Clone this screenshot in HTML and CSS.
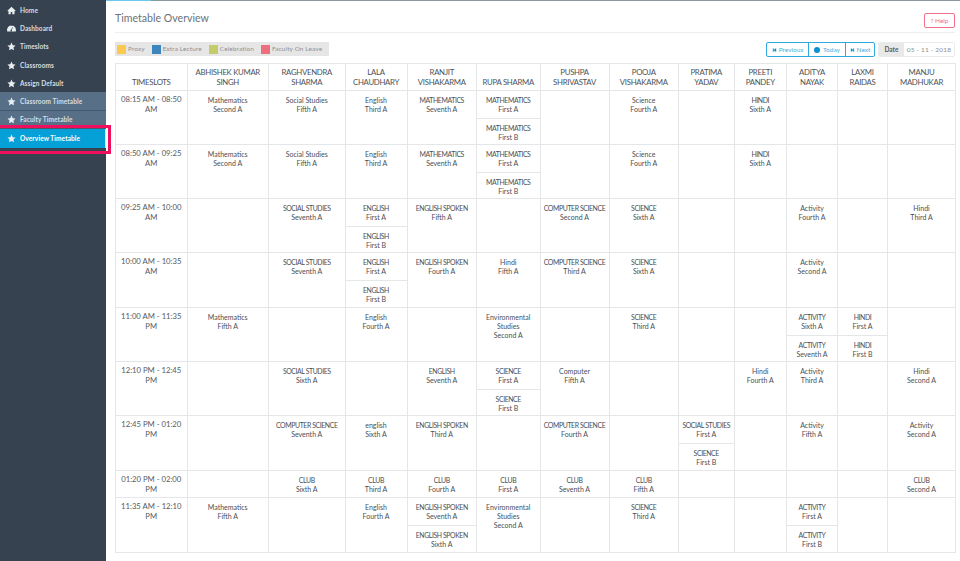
FILE: index.html
```html
<!DOCTYPE html>
<html lang="en">
<head>
    <meta charset="UTF-8">
    <meta name="viewport" content="width=device-width, initial-scale=1.0">
    <title>Timetable Overview</title>
    <link rel="stylesheet" href="styles.css">
</head>
<body>
    <svg class="icon-defs" width="0" height="0">
        <symbol id="star" viewBox="0 0 24 24"><path d="M12 1.5l3.300 6.900 7.500 1-5.500 5.200 1.400 7.500L12 18.400l-6.700 3.700 1.400-7.500L1.200 9.400l7.500-1z"/></symbol>
        <symbol id="home" viewBox="0 0 24 24"><path d="M12 2L1 12.500l1.800 1.800L4 13.200V22h6v-6h4v6h6v-8.800l1.200 1.100 1.800-1.800z"/></symbol>
        <symbol id="gauge" viewBox="0 0 24 24"><path d="M12 4C5.400 4 0 9.400 0 16c0 1.500.3 2.800.8 4h22.400c.5-1.200.8-2.500.8-4 0-6.600-5.400-12-12-12zm-1 11.500l3-7 1.500.6-3 7A2 2 0 1 1 11 15.500z"/></symbol>
        <symbol id="step-back" viewBox="0 0 24 24"><path d="M4 3h4v8l12-8v18L8 13v8H4z"/></symbol>
        <symbol id="step-next" viewBox="0 0 24 24"><path d="M20 3h-4v8L4 3v18l12-8v8h4z"/></symbol>
    </svg>

    <aside class="sidebar">
        <nav>
            <a class="nav-item" href="#"><svg class="nav-icon"><use href="#home"/></svg>Home</a>
            <a class="nav-item" href="#"><svg class="nav-icon"><use href="#gauge"/></svg>Dashboard</a>
            <a class="nav-item" href="#"><svg class="nav-icon"><use href="#star"/></svg>Timeslots</a>
            <a class="nav-item" href="#"><svg class="nav-icon"><use href="#star"/></svg>Classrooms</a>
            <a class="nav-item" href="#"><svg class="nav-icon"><use href="#star"/></svg>Assign Default</a>
            <a class="nav-item open" href="#"><svg class="nav-icon"><use href="#star"/></svg>Classroom Timetable</a>
            <a class="nav-item open" href="#"><svg class="nav-icon"><use href="#star"/></svg>Faculty Timetable</a>
            <a class="nav-item active" href="#"><svg class="nav-icon"><use href="#star"/></svg>Overview Timetable</a>
        </nav>
    </aside>

    <main class="content">
        <div class="progress"></div>
        <header class="page-head">
            <h1>Timetable Overview</h1>
            <a class="help" href="#">? Help</a>
        </header>

        <div class="toolbar">
            <ul class="legend">
                <li><span class="swatch proxy"></span>Proxy</li>
                <li><span class="swatch extra"></span>Extra Lecture</li>
                <li><span class="swatch celebration"></span>Celebration</li>
                <li><span class="swatch leave"></span>Faculty On Leave</li>
            </ul>
            <div class="controls">
                <div class="btn-group">
                    <a class="btn-prev" href="#"><svg class="btn-icon"><use href="#step-back"/></svg>Previous</a>
                    <a class="btn-today" href="#"><span class="dot"></span>Today</a>
                    <a class="btn-next" href="#"><svg class="btn-icon"><use href="#step-next"/></svg>Next</a>
                </div>
                <div class="date-field">
                    <span class="date-label">Date</span>
                    <span class="date-value">05 - 11 - 2018</span>
                </div>
            </div>
        </div>

        <table class="timetable">
            <colgroup>
                <col class="c-time"><col class="c1"><col class="c2"><col class="c3"><col class="c4"><col class="c5"><col class="c6"><col class="c7"><col class="c8"><col class="c9"><col class="c10"><col class="c11"><col class="c12">
            </colgroup>
            <thead>
                <tr>
                    <th>TIMESLOTS</th>
                    <th>ABHISHEK KUMAR SINGH</th>
                    <th>RAGHVENDRA SHARMA</th>
                    <th>LALA CHAUDHARY</th>
                    <th>RANJIT VISHAKARMA</th>
                    <th>RUPA SHARMA</th>
                    <th>PUSHPA SHRIVASTAV</th>
                    <th>POOJA VISHAKARMA</th>
                    <th>PRATIMA YADAV</th>
                    <th>PREETI PANDEY</th>
                    <th>ADITYA NAYAK</th>
                    <th>LAXMI RAIDAS</th>
                    <th>MANJU MADHUKAR</th>
                </tr>
            </thead>
            <tbody>
                <tr>
                    <td class="time">08:15 AM - 08:50 AM</td>
                    <td>Mathematics<br>Second A</td>
                    <td>Social Studies<br>Fifth A</td>
                    <td>English<br>Third A</td>
                    <td><span class="caps">MATHEMATICS</span><br>Seventh A</td>
                    <td class="split"><div><span class="caps">MATHEMATICS</span><br>First A</div><div><span class="caps">MATHEMATICS</span><br>First B</div></td>
                    <td></td>
                    <td>Science<br>Fourth A</td>
                    <td></td>
                    <td><span class="caps">HINDI</span><br>Sixth A</td>
                    <td></td>
                    <td></td>
                    <td></td>
                </tr>
                <tr>
                    <td class="time">08:50 AM - 09:25 AM</td>
                    <td>Mathematics<br>Second A</td>
                    <td>Social Studies<br>Fifth A</td>
                    <td>English<br>Third A</td>
                    <td><span class="caps">MATHEMATICS</span><br>Seventh A</td>
                    <td class="split"><div><span class="caps">MATHEMATICS</span><br>First A</div><div><span class="caps">MATHEMATICS</span><br>First B</div></td>
                    <td></td>
                    <td>Science<br>Fourth A</td>
                    <td></td>
                    <td><span class="caps">HINDI</span><br>Sixth A</td>
                    <td></td>
                    <td></td>
                    <td></td>
                </tr>
                <tr>
                    <td class="time">09:25 AM - 10:00 AM</td>
                    <td></td>
                    <td><span class="caps">SOCIAL STUDIES</span><br>Seventh A</td>
                    <td class="split"><div><span class="caps">ENGLISH</span><br>First A</div><div><span class="caps">ENGLISH</span><br>First B</div></td>
                    <td><span class="caps">ENGLISH SPOKEN</span><br>Fifth A</td>
                    <td></td>
                    <td><span class="caps">COMPUTER SCIENCE</span><br>Second A</td>
                    <td><span class="caps">SCIENCE</span><br>Sixth A</td>
                    <td></td>
                    <td></td>
                    <td>Activity<br>Fourth A</td>
                    <td></td>
                    <td>Hindi<br>Third A</td>
                </tr>
                <tr class="tall">
                    <td class="time">10:00 AM - 10:35 AM</td>
                    <td></td>
                    <td><span class="caps">SOCIAL STUDIES</span><br>Seventh A</td>
                    <td class="split"><div><span class="caps">ENGLISH</span><br>First A</div><div><span class="caps">ENGLISH</span><br>First B</div></td>
                    <td><span class="caps">ENGLISH SPOKEN</span><br>Fourth A</td>
                    <td>Hindi<br>Fifth A</td>
                    <td><span class="caps">COMPUTER SCIENCE</span><br>Third A</td>
                    <td><span class="caps">SCIENCE</span><br>Sixth A</td>
                    <td></td>
                    <td></td>
                    <td>Activity<br>Second A</td>
                    <td></td>
                    <td></td>
                </tr>
                <tr>
                    <td class="time">11:00 AM - 11:35 PM</td>
                    <td>Mathematics<br>Fifth A</td>
                    <td></td>
                    <td>English<br>Fourth A</td>
                    <td></td>
                    <td>Environmental<br>Studies<br>Second A</td>
                    <td></td>
                    <td><span class="caps">SCIENCE</span><br>Third A</td>
                    <td></td>
                    <td></td>
                    <td class="split"><div><span class="caps">ACTIVITY</span><br>Sixth A</div><div><span class="caps">ACTIVITY</span><br>Seventh A</div></td>
                    <td class="split"><div><span class="caps">HINDI</span><br>First A</div><div><span class="caps">HINDI</span><br>First B</div></td>
                    <td></td>
                </tr>
                <tr>
                    <td class="time">12:10 PM - 12:45 PM</td>
                    <td></td>
                    <td><span class="caps">SOCIAL STUDIES</span><br>Sixth A</td>
                    <td></td>
                    <td><span class="caps">ENGLISH</span><br>Seventh A</td>
                    <td class="split"><div><span class="caps">SCIENCE</span><br>First A</div><div><span class="caps">SCIENCE</span><br>First B</div></td>
                    <td>Computer<br>Fifth A</td>
                    <td></td>
                    <td></td>
                    <td>Hindi<br>Fourth A</td>
                    <td>Activity<br>Third A</td>
                    <td></td>
                    <td>Hindi<br>Second A</td>
                </tr>
                <tr class="tall">
                    <td class="time">12:45 PM - 01:20 PM</td>
                    <td></td>
                    <td><span class="caps">COMPUTER SCIENCE</span><br>Seventh A</td>
                    <td>english<br>Sixth A</td>
                    <td><span class="caps">ENGLISH SPOKEN</span><br>Third A</td>
                    <td></td>
                    <td><span class="caps">COMPUTER SCIENCE</span><br>Fourth A</td>
                    <td></td>
                    <td class="split"><div><span class="caps">SOCIAL STUDIES</span><br>First A</div><div><span class="caps">SCIENCE</span><br>First B</div></td>
                    <td></td>
                    <td>Activity<br>Fifth A</td>
                    <td></td>
                    <td>Activity<br>Second A</td>
                </tr>
                <tr class="short">
                    <td class="time">01:20 PM - 02:00 PM</td>
                    <td></td>
                    <td><span class="caps">CLUB</span><br>Sixth A</td>
                    <td><span class="caps">CLUB</span><br>Third A</td>
                    <td><span class="caps">CLUB</span><br>Fourth A</td>
                    <td><span class="caps">CLUB</span><br>First A</td>
                    <td><span class="caps">CLUB</span><br>Seventh A</td>
                    <td><span class="caps">CLUB</span><br>Fifth A</td>
                    <td></td>
                    <td></td>
                    <td></td>
                    <td></td>
                    <td><span class="caps">CLUB</span><br>Second A</td>
                </tr>
                <tr class="tall">
                    <td class="time">11:35 AM - 12:10 PM</td>
                    <td>Mathematics<br>Fifth A</td>
                    <td></td>
                    <td>English<br>Fourth A</td>
                    <td class="split"><div><span class="caps">ENGLISH SPOKEN</span><br>Seventh A</div><div><span class="caps">ENGLISH SPOKEN</span><br>Sixth A</div></td>
                    <td>Environmental<br>Studies<br>Second A</td>
                    <td></td>
                    <td><span class="caps">SCIENCE</span><br>Third A</td>
                    <td></td>
                    <td></td>
                    <td class="split"><div><span class="caps">ACTIVITY</span><br>First A</div><div><span class="caps">ACTIVITY</span><br>First B</div></td>
                    <td></td>
                    <td></td>
                </tr>
            </tbody>
        </table>
    </main>

    <div class="callout"></div>
</body>
</html>
```

FILE: styles.css
```css
* {
    box-sizing: border-box;
}

html, body {
    height: 100%;
}

body {
    margin: 0;
    display: flex;
    background: #fff;
    color: #4a4f55;
    font-family: "Lato", "Open Sans", sans-serif;
    font-size: 7px;
    line-height: 9px;
    overflow: hidden;
}

a {
    color: inherit;
    text-decoration: none;
}

.icon-defs {
    position: absolute;
}

/* Sidebar */
.sidebar {
    flex: 0 0 106px;
    background: #36424f;
    padding-top: 1px;
}

.nav-item {
    display: flex;
    align-items: center;
    height: 18.3px;
    padding-left: 7px;
    color: #d7dde3;
    font-size: 6.5px;
    font-weight: 700;
    letter-spacing: 0.1px;
    white-space: nowrap;
}

.nav-icon {
    flex: none;
    width: 9px;
    height: 9px;
    margin-right: 4px;
    fill: #e8edf1;
}

.nav-item.open {
    background: #587087;
    border-bottom: 1px solid #465a6e;
}

.nav-item.active {
    background: #05a0d8;
    border-right: 1px solid #cfeaf6;
    color: #fff;
    height: 19px;
}

/* Main column */
.content {
    flex: 1;
    min-width: 0;
    padding: 0 5px 0 9px;
    position: relative;
}

.progress {
    position: absolute;
    top: 0;
    left: 0;
    right: 0;
    height: 1px;
    background: linear-gradient(to right, #6cc7ee 45px, #8f979f 45px);
}

.page-head {
    display: flex;
    justify-content: space-between;
    align-items: center;
    height: 33px;
    margin-bottom: 9px;
    border-bottom: 1px solid #eceef0;
    padding-top: 3px;
}

.page-head h1 {
    margin: 0;
    color: #6b7278;
    font-size: 10.6px;
    line-height: 14px;
    font-weight: 400;
}

.help {
    border: 1px solid #f2708a;
    border-radius: 2px;
    padding: 3px 4px;
    color: #f2708a;
    font-size: 6.5px;
    line-height: 7px;
    margin-top: 5px;
    width: 31px;
    text-align: center;
}

.toolbar {
    display: flex;
    justify-content: space-between;
    align-items: flex-start;
    height: 21px;
}

.legend {
    display: flex;
    gap: 7px;
    list-style: none;
    margin: 0;
    padding: 1px 7px 1px 2px;
    height: 14px;
    background: #e6e6e6;
    color: #8d9296;
    font-size: 6.4px;
    line-height: 12px;
    letter-spacing: 0.15px;
}

.legend li {
    display: flex;
    align-items: center;
    gap: 2px;
}

.swatch {
    width: 9px;
    height: 9px;
}

.proxy { background: #fbc94f; }
.extra { background: #3d85bd; }
.celebration { background: #c5cb68; }
.leave { background: #ec6f7c; }

.controls {
    display: flex;
    gap: 3px;
}

.btn-group {
    display: flex;
    height: 15px;
    border: 1px solid #2fa8de;
    border-radius: 2px;
    color: #45b0e2;
    font-size: 6.5px;
    line-height: 13px;
}

.btn-group a {
    display: flex;
    align-items: center;
    justify-content: center;
    gap: 2px;
    border-left: 1px solid #2fa8de;
}

.btn-group a:first-child {
    border-left: 0;
}

.btn-prev { width: 41px; }
.btn-today { width: 37px; }
.btn-next { width: 29px; }

.btn-icon {
    width: 5px;
    height: 6px;
    fill: #0a8fd0;
}

.dot {
    width: 6px;
    height: 6px;
    margin-right: 1px;
    border-radius: 50%;
    background: #0a8fd0;
}

.date-field {
    display: flex;
    height: 15px;
    border: 1px solid #e9ecef;
    border-radius: 2px;
    font-size: 6.5px;
    line-height: 13px;
}

.date-label {
    width: 25px;
    text-align: center;
    background: #e9e9e9;
    color: #5a5f64;
    font-weight: 700;
}

.date-value {
    width: 50px;
    text-align: center;
    color: #8b9096;
    letter-spacing: 0.2px;
}

/* Table */
.timetable {
    width: 841px;
    table-layout: fixed;
    border-collapse: collapse;
    text-align: center;
}

.c-time { width: 71.5px; }
.c1 { width: 81.5px; }
.c2 { width: 76.5px; }
.c3 { width: 62px; }
.c4 { width: 69.5px; }
.c5 { width: 63.5px; }
.c6 { width: 69px; }
.c7 { width: 69.5px; }
.c8 { width: 55.5px; }
.c9 { width: 52.5px; }
.c10 { width: 51px; }
.c11 { width: 50px; }
.c12 { width: 68px; }

.timetable th,
.timetable td {
    border: 1px solid #e4e6e8;
    padding: 0;
}

.timetable th {
    height: 27px;
    padding: 2px 3px 3px;
    vertical-align: bottom;
    color: #4d5257;
    font-size: 7.8px;
    line-height: 10px;
    font-weight: 400;
    letter-spacing: -0.3px;
}

.timetable td {
    height: 54px;
    padding: 5px 1px;
    vertical-align: top;
}

.timetable tr.tall td {
    height: 55px;
}

.timetable tr.short td {
    height: 27px;
    padding-bottom: 0;
}

.timetable td.time {
    padding: 3px 1px 0;
    color: #555a5f;
    font-size: 7.7px;
    line-height: 10px;
}

.timetable td.split {
    padding: 0;
}

.split div {
    height: 26.5px;
    padding: 5px 1px 0;
}

.split div + div {
    border-top: 1px solid #e4e6e8;
}

/* Upper-case subject names are set tighter than the mixed-case ones */
.caps {
    font-size: 6.9px;
    letter-spacing: -0.4px;
}

/* Highlight drawn over the screenshot */
.callout {
    position: absolute;
    top: 125px;
    left: -4px;
    width: 115px;
    height: 29px;
    border: 3px solid #ef0f5c;
}
```
